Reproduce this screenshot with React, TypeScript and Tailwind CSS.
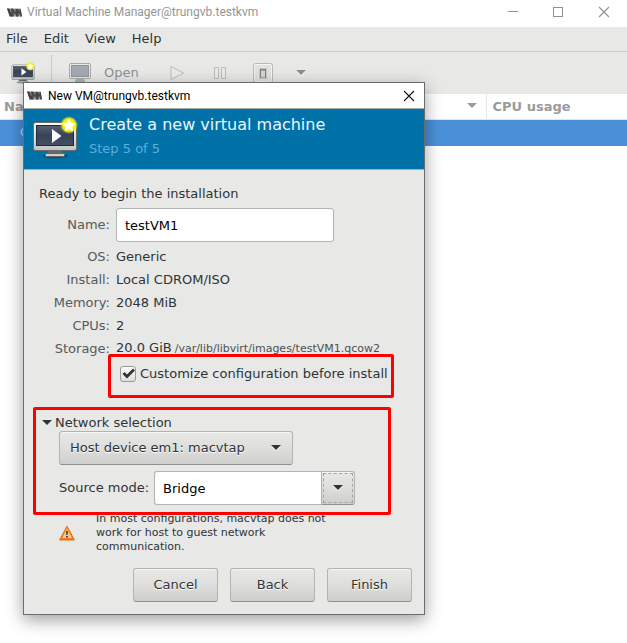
import { useState } from "react";

const DEJAVU = "font-['DejaVu_Sans',sans-serif]";

function VmmLogo() {
  return (
    <svg width="15" height="9" viewBox="0 0 15 9" aria-hidden="true" className="shrink-0">
      <path d="M0 .5h13.500L15 8.500H2.500z" fill="#9c9a9a" />
      <path d="M0 .5h2.200L4 5l.3-4.500h1.500L5.500 8.500H2.800z" fill="#3f3f41" />
      <path d="M5.200 8.500V1h1.600l1.300 3.500L8.600 1h1.500l.6 7.500H9L8.600 5l-.5 2L6.700 4.500v4z" fill="#4a4647" />
      <path d="M10 8.500L9.800 1h1.400l1 3L12.500 1h1.200L15 8.500h-1.600L12.700 5l-.4 2-1-2.200.3 3.700z" fill="#434244" />
      <path d="M3.500 1.500l1.300 3.500M8 1.500l.7 2" stroke="#a94a4e" strokeWidth=".8" />
    </svg>
  );
}

function NewVmIcon({ size, id }: { size: number; id: string }) {
  return (
    <svg width={size} height={size} viewBox="0 0 46 46" aria-hidden="true" className="shrink-0">
      <defs>
        <linearGradient id={id + "f"} x1="0" y1="0" x2="0" y2="1">
          <stop offset="0" stopColor="#fbfbfa" />
          <stop offset="1" stopColor="#c3c4c1" />
        </linearGradient>
        <linearGradient id={id + "s"} x1="0" y1="0" x2="0" y2="1">
          <stop offset="0" stopColor="#566072" />
          <stop offset=".5" stopColor="#364255" />
          <stop offset="1" stopColor="#435066" />
        </linearGradient>
        <radialGradient id={id + "g"}>
          <stop offset="0" stopColor="#ffff50" />
          <stop offset=".7" stopColor="#f1ee12" />
          <stop offset="1" stopColor="#e8e800" stopOpacity="0" />
        </radialGradient>
      </defs>
      <ellipse cx="23" cy="41" rx="13" ry="2.500" fill="#000" opacity=".25" />
      <path d="M17 35h12l2 4H15z" fill="#676a6b" />
      <rect x="13.500" y="38.500" width="19" height="3" rx="1" fill="#d0d1ce" stroke="#636663" />
      <rect x="1.500" y="7.500" width="43" height="28" rx="2" fill={"url(#" + id + "f)"} stroke="#696c69" />
      <rect x="4.500" y="10.500" width="37" height="20" fill={"url(#" + id + "s)"} stroke="#202836" />
      <path d="M20 14v14l9.500-7z" fill="#fff" />
      <circle cx="37" cy="10" r="9" fill={"url(#" + id + "g)"} />
      <path d="M37 3.500l2 4.400 4.600.5-3.400 3.300.9 4.700-4.100-2.400-4.100 2.400.9-4.700-3.400-3.300 4.600-.5z" fill="#fff" />
    </svg>
  );
}

function MonitorIcon() {
  return (
    <svg width="24" height="22" viewBox="0 0 24 22" aria-hidden="true">
      <rect x="1.500" y="1.500" width="21" height="15" rx="1.500" fill="#ececea" stroke="#a6a8a6" />
      <rect x="3.500" y="3.500" width="17" height="11" fill="#a4aab4" stroke="#8f949c" />
      <path d="M8 17h8l1 2H7z" fill="#b4b6b4" />
      <path d="M7 19.500h10" stroke="#a9aba9" />
    </svg>
  );
}

function Arrow({ color = "#2e3436", shadow = true }: { color?: string; shadow?: boolean }) {
  return (
    <svg width="10" height="6" viewBox="0 0 10 6" aria-hidden="true" className="shrink-0">
      {shadow && <path d="M0 1h10L5 6z" fill="#fff" />}
      <path d="M0 0h10L5 5z" fill={color} />
    </svg>
  );
}

function CloseIcon({ color }: { color: string }) {
  return (
    <svg width="12" height="12" viewBox="0 0 12 12" aria-hidden="true">
      <path d="M1 1l10 10M11 1L1 11" stroke={color} strokeWidth="1.100" />
    </svg>
  );
}

function WarningIcon() {
  return (
    <svg width="16" height="16" viewBox="0 0 16 16" aria-hidden="true" className="shrink-0">
      <defs>
        <linearGradient id="warn" x1="0" y1="0" x2="0" y2="1">
          <stop offset="0" stopColor="#f79a3c" />
          <stop offset="1" stopColor="#f5791f" />
        </linearGradient>
      </defs>
      <path d="M8 1.200L15.400 15H.6z" fill="url(#warn)" stroke="#d5701c" strokeLinejoin="round" />
      <path d="M8 4L12.800 13H3.200z" fill="#fcc98d" />
      <path d="M7.100 6h1.800l-.3 4H7.400zM7.100 11h1.800v1.500H7.100z" fill="#33373a" />
    </svg>
  );
}

const raised =
  "rounded-[3px] border border-[#b2b4b1] border-b-[#8f918e] bg-linear-to-b from-[#e8e8e7] via-[#dededd] to-[#cececd] text-[#2e3436] shadow-[inset_0_1px_0_#f5f5f4] [text-shadow:0_1px_0_#fff]";

function Row({ label, children }: { label: string; children: React.ReactNode }) {
  return (
    <div className="flex h-[23px] items-center gap-1.5">
      <dt className="w-[71px] shrink-0 text-right text-[#555a5b]">{label}</dt>
      <dd className="flex items-baseline gap-[3px] whitespace-nowrap">{children}</dd>
    </div>
  );
}

function ManagerWindow() {
  return (
    <div className={"bg-white text-[13px] text-[#2e3436] " + DEJAVU}>
      <header className="flex h-[27px] items-start justify-between">
        <div className="flex h-6 items-center gap-[5px] pl-[7px]">
          <VmmLogo />
          <span className="font-[Roboto,sans-serif] text-[12px] text-[#959595]">Virtual Machine Manager@trungvb.testkvm</span>
        </div>
        <div className="flex h-[23px]">
          <button aria-label="Minimize" className="flex w-[45px] items-center justify-center">
            <span className="w-2.5 border-t border-[#909090]" />
          </button>
          <button aria-label="Maximize" className="flex w-[46px] items-center justify-center">
            <span className="size-2.5 border border-[#909090]" />
          </button>
          <button aria-label="Close" className="flex w-[46px] items-center justify-center">
            <CloseIcon color="#909090" />
          </button>
        </div>
      </header>
      <nav className="flex h-[25px] items-center gap-4 border-b border-[#cbccca] bg-[#e8e8e7] pl-1.5">
        <button>File</button>
        <button>Edit</button>
        <button>View</button>
        <button>Help</button>
      </nav>
      <div className="flex h-[42px] items-center bg-[#e8e8e7]">
        <button aria-label="Create a new virtual machine" className="pr-4 pl-[11px]">
          <NewVmIcon size={24} id="tool" />
        </button>
        <span className="mr-4 h-9 w-px bg-[#cbccca]" />
        <button className="flex items-center gap-3 text-[#8d9091]">
          <MonitorIcon />
          Open
        </button>
        <button aria-label="Run" className="ml-[31px]">
          <svg width="15" height="16" viewBox="0 0 15 16" aria-hidden="true">
            <path d="M1 1.500v13L13.500 8z" fill="#ebebea" stroke="#bcbdbb" />
          </svg>
        </button>
        <button aria-label="Pause" className="ml-7">
          <svg width="14" height="14" viewBox="0 0 14 14" aria-hidden="true">
            <path d="M1.500 1.500h4v11h-4zM8.500 1.500h4v11h-4z" fill="#ebebea" stroke="#bcbdbb" />
          </svg>
        </button>
        <button aria-label="Shut down" className="ml-[26px]">
          <svg width="20" height="20" viewBox="0 0 20 20" aria-hidden="true">
            <rect x=".5" y=".5" width="19" height="19" rx="2" fill="#e2e2e1" stroke="#b9bab8" />
            <rect x="1.500" y="1.500" width="17" height="17" rx="1" fill="none" stroke="#f5f5f4" />
            <rect x="6.500" y="5.500" width="7" height="10" fill="#7f817f" stroke="#c9cac8" />
            <rect x="8" y="7.500" width="4" height="7" fill="#d5d5d3" />
          </svg>
        </button>
        <button aria-label="Shut down options" className="ml-[23px]">
          <Arrow color="#8d9091" />
        </button>
      </div>
      <table className="w-full table-fixed border-collapse">
        <thead>
          <tr className="h-[25px] border-b border-[#e4e4e4] text-left text-[#999c9b]">
            <th className="w-[486px] border-r border-[#e4e4e4] p-0 px-1">
              <span className="flex items-center justify-between pr-[5px]">
                Name
                <Arrow color="#999c9b" shadow={false} />
              </span>
            </th>
            <th className="p-0 pl-1.5">CPU usage</th>
          </tr>
        </thead>
        <tbody>
          <tr className="h-[27px] bg-[#4a90d9] text-[11px] text-white/70">
            <td className="p-0 pl-5">QEMU/KVM</td>
            <td />
          </tr>
        </tbody>
      </table>
    </div>
  );
}

function NewVmDialog() {
  const [name, setName] = useState("testVM1");
  const [mode, setMode] = useState("Bridge");
  const [customize, setCustomize] = useState(true);

  return (
    <section
      role="dialog"
      aria-label="New VM"
      className={
        "absolute top-[82px] left-[23px] w-[402px] border border-[#6a6c6d] bg-[#e8e8e7] text-[13px] leading-4 text-[#2e3436] shadow-[0_5px_16px_rgba(0,0,0,0.38)] " +
        DEJAVU
      }
    >
      <header className="flex h-[25px] items-center justify-between bg-white pr-[9px] pl-[3px]">
        <div className="flex items-center gap-[6px]">
          <VmmLogo />
          <span className="font-[Roboto,sans-serif] text-[12px] text-black">New VM@trungvb.testkvm</span>
        </div>
        <button aria-label="Close">
          <CloseIcon color="#111" />
        </button>
      </header>
      <div className="flex h-[62px] items-start gap-[11px] border-y border-[#a9aba8] bg-[#0072a8] pt-1.5 pl-2">
        <NewVmIcon size={46} id="head" />
        <div>
          <h1 className="text-[16px] leading-5 text-[#ecf5fa]">Create a new virtual machine</h1>
          <p className="mt-1.5 text-[#59afdd]">Step 5 of 5</p>
        </div>
      </div>

      <form className="pt-4 pr-3 pb-3 pl-[15px]" onSubmit={(e) => e.preventDefault()}>
        <p>Ready to begin the installation</p>
        <div className="mt-[6px] flex items-center gap-1.5">
          <label htmlFor="vm-name" className="w-[71px] shrink-0 text-right text-[#555a5b]">
            Name:
          </label>
          <input
            id="vm-name"
            value={name}
            onChange={(e) => setName(e.target.value)}
            className="h-[34px] w-[218px] rounded-[3px] border border-[#b2b4b1] bg-white px-2 text-black outline-none"
          />
        </div>
        <dl className="mt-[3px]">
          <Row label="OS:">Generic</Row>
          <Row label="Install:">Local CDROM/ISO</Row>
          <Row label="Memory:">2048 MiB</Row>
          <Row label="CPUs:">2</Row>
          <Row label="Storage:">
            <span>20.0 GiB</span>
            <span className="text-[11px] text-[#4c5152]">/var/lib/libvirt/images/testVM1.qcow2</span>
          </Row>
        </dl>
        <label className="relative mt-1.5 ml-[81px] flex items-center gap-1">
          <input
            type="checkbox"
            checked={customize}
            onChange={(e) => setCustomize(e.target.checked)}
            className="peer size-4 appearance-none rounded-[3px] border border-[#999b98] bg-linear-to-b from-[#fbfbfb] to-[#dededd]"
          />
          <svg width="16" height="16" viewBox="0 0 16 16" aria-hidden="true" className="invisible absolute left-0 peer-checked:visible">
            <path d="M3.500 7l3.500 3.500L14 3.500" fill="none" stroke="#2e3436" strokeWidth="2.800" />
          </svg>
          <span className="whitespace-nowrap">Customize configuration before install</span>
          <span className="pointer-events-none absolute -top-3 -left-3 h-11 w-[286px] rounded-[2px] border-3 border-[#fe0000]" />
        </label>

        <div className="relative mt-[33px]">
          <button type="button" aria-expanded="true" className="flex items-center gap-[3px] pl-[3px]">
            <Arrow shadow={false} />
            Network selection
          </button>
          <div className="pl-5">
            <div className="relative w-[234px]">
              <select
                aria-label="Network source"
                className={"block h-[34px] w-full appearance-none pr-8 pl-2.5 " + raised}
              >
                <option>Host device em1: macvtap</option>
              </select>
              <span className="pointer-events-none absolute inset-y-0 right-3 flex items-center">
                <Arrow />
              </span>
            </div>
            <div className="mt-1.5 flex items-center">
              <label htmlFor="source-mode" className="w-[95px] shrink-0 whitespace-nowrap">
                Source mode:
              </label>
              <input
                id="source-mode"
                value={mode}
                onChange={(e) => setMode(e.target.value)}
                className="h-[34px] w-[167px] rounded-l-[3px] border border-r-0 border-[#b2b4b1] bg-white px-2 text-black outline-none"
              />
              <button
                type="button"
                aria-label="Show source modes"
                className={"h-[34px] w-[34px] rounded-l-none p-px " + raised}
              >
                <span className="flex size-full items-center justify-center border border-dashed border-[#a3a5a2]">
                  <Arrow />
                </span>
              </button>
            </div>
            <div className="mt-[7px] flex items-center gap-[21px] text-[11px] leading-[14px]">
              <WarningIcon />
              <p className="w-[250px]">In most configurations, macvtap does not work for host to guest network communication.</p>
            </div>
          </div>
          <span className="pointer-events-none absolute -top-2 -left-1.5 h-[108px] w-[358px] rounded-[2px] border-3 border-[#fe0000]" />
        </div>

        <div className="mt-3.5 flex justify-end gap-3">
          <button type="button" className={"h-[34px] w-[85px] " + raised}>Cancel</button>
          <button type="button" className={"h-[34px] w-[85px] " + raised}>Back</button>
          <button type="submit" className={"h-[34px] w-[85px] " + raised}>Finish</button>
        </div>
      </form>
    </section>
  );
}

export default function App() {
  return (
    <main className="relative min-h-screen bg-white">
      <ManagerWindow />
      <NewVmDialog />
    </main>
  );
}
